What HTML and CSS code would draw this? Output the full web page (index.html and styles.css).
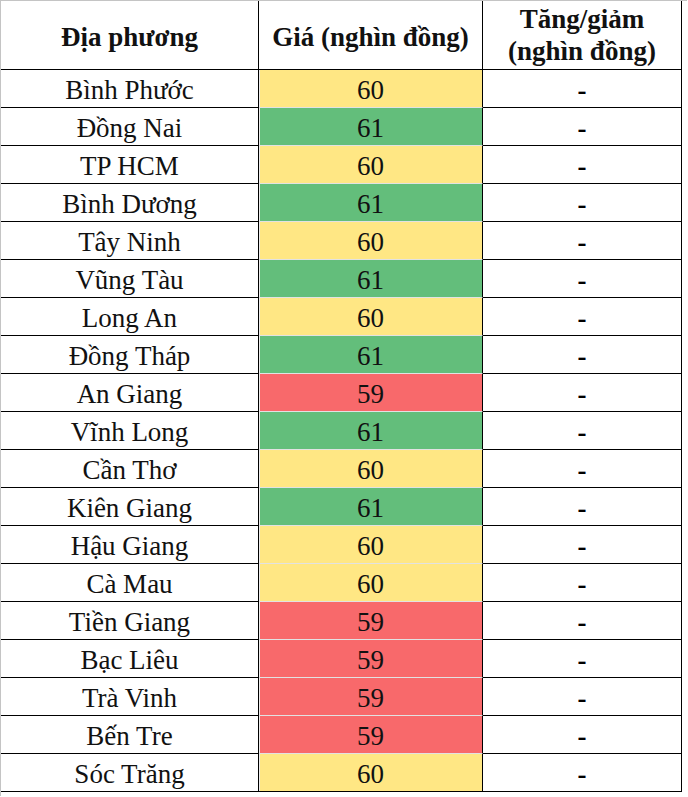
FILE: index.html
```html
<!DOCTYPE html>
<html lang="vi">
<head>
<meta charset="utf-8">
<title>Giá</title>
<link rel="stylesheet" href="styles.css">
</head>
<body>
<div class="frame">
  <div class="sheet">
    <div class="cell head c1">Địa phương</div>
    <div class="cell head c2">Giá (nghìn đồng)</div>
    <div class="cell head c3 two">Tăng/giảm<br>(nghìn đồng)</div>

    <div class="cell c1">Bình Phước</div><div class="cell c2 y">60</div><div class="cell c3 dash">-</div>
    <div class="cell c1">Đồng Nai</div><div class="cell c2 g">61</div><div class="cell c3 dash">-</div>
    <div class="cell c1">TP HCM</div><div class="cell c2 y">60</div><div class="cell c3 dash">-</div>
    <div class="cell c1">Bình Dương</div><div class="cell c2 g">61</div><div class="cell c3 dash">-</div>
    <div class="cell c1">Tây Ninh</div><div class="cell c2 y">60</div><div class="cell c3 dash">-</div>
    <div class="cell c1">Vũng Tàu</div><div class="cell c2 g">61</div><div class="cell c3 dash">-</div>
    <div class="cell c1">Long An</div><div class="cell c2 y">60</div><div class="cell c3 dash">-</div>
    <div class="cell c1">Đồng Tháp</div><div class="cell c2 g">61</div><div class="cell c3 dash">-</div>
    <div class="cell c1">An Giang</div><div class="cell c2 r">59</div><div class="cell c3 dash">-</div>
    <div class="cell c1">Vĩnh Long</div><div class="cell c2 g">61</div><div class="cell c3 dash">-</div>
    <div class="cell c1">Cần Thơ</div><div class="cell c2 y">60</div><div class="cell c3 dash">-</div>
    <div class="cell c1">Kiên Giang</div><div class="cell c2 g">61</div><div class="cell c3 dash">-</div>
    <div class="cell c1">Hậu Giang</div><div class="cell c2 y">60</div><div class="cell c3 dash">-</div>
    <div class="cell c1">Cà Mau</div><div class="cell c2 y">60</div><div class="cell c3 dash">-</div>
    <div class="cell c1">Tiền Giang</div><div class="cell c2 r">59</div><div class="cell c3 dash">-</div>
    <div class="cell c1">Bạc Liêu</div><div class="cell c2 r">59</div><div class="cell c3 dash">-</div>
    <div class="cell c1">Trà Vinh</div><div class="cell c2 r">59</div><div class="cell c3 dash">-</div>
    <div class="cell c1">Bến Tre</div><div class="cell c2 r">59</div><div class="cell c3 dash">-</div>
    <div class="cell c1">Sóc Trăng</div><div class="cell c2 y last">60</div><div class="cell c3 dash">-</div>
  </div>
</div>
</body>
</html>
```
FILE: styles.css
```css
html, body {
  margin: 0;
  padding: 0;
  background: #ffffff;
}
body {
  font-family: "Liberation Serif", serif;
  color: #111;
}
.frame {
  width: 687px;
  height: 796px;
  border-top: 1px solid #c4c4c4;
  border-left: 1px solid #c4c4c4;
  box-sizing: border-box;
}
.sheet {
  display: grid;
  grid-template-columns: 258px 224px 199px;
  grid-template-rows: 69px repeat(19, 38px);
}
.cell {
  box-sizing: border-box;
  display: flex;
  align-items: center;
  justify-content: center;
  text-align: center;
  font-family: "Liberation Serif", serif;
  font-size: 27px;
  line-height: 37px;
  padding-top: 3px;
  border-right: 1px solid #000;
  border-bottom: 1px solid #000;
  white-space: nowrap;
}
.head {
  font-weight: bold;
  padding-top: 4px;
}
.head.two {
  line-height: 32px;
  padding-top: 0;
}
.c2.y, .c2.g, .c2.r {
  border-bottom: 1px solid #e2e2e2;
  box-shadow: inset 1px 0 0 #ececec;
}
.c2.y { background: #ffe784; }
.c2.g { background: #63be7b; }
.c2.r { background: #f8696b; }
.c2.last { border-bottom-color: #000; }
.dash {
  font-weight: bold;
  color: #000;
}
```
